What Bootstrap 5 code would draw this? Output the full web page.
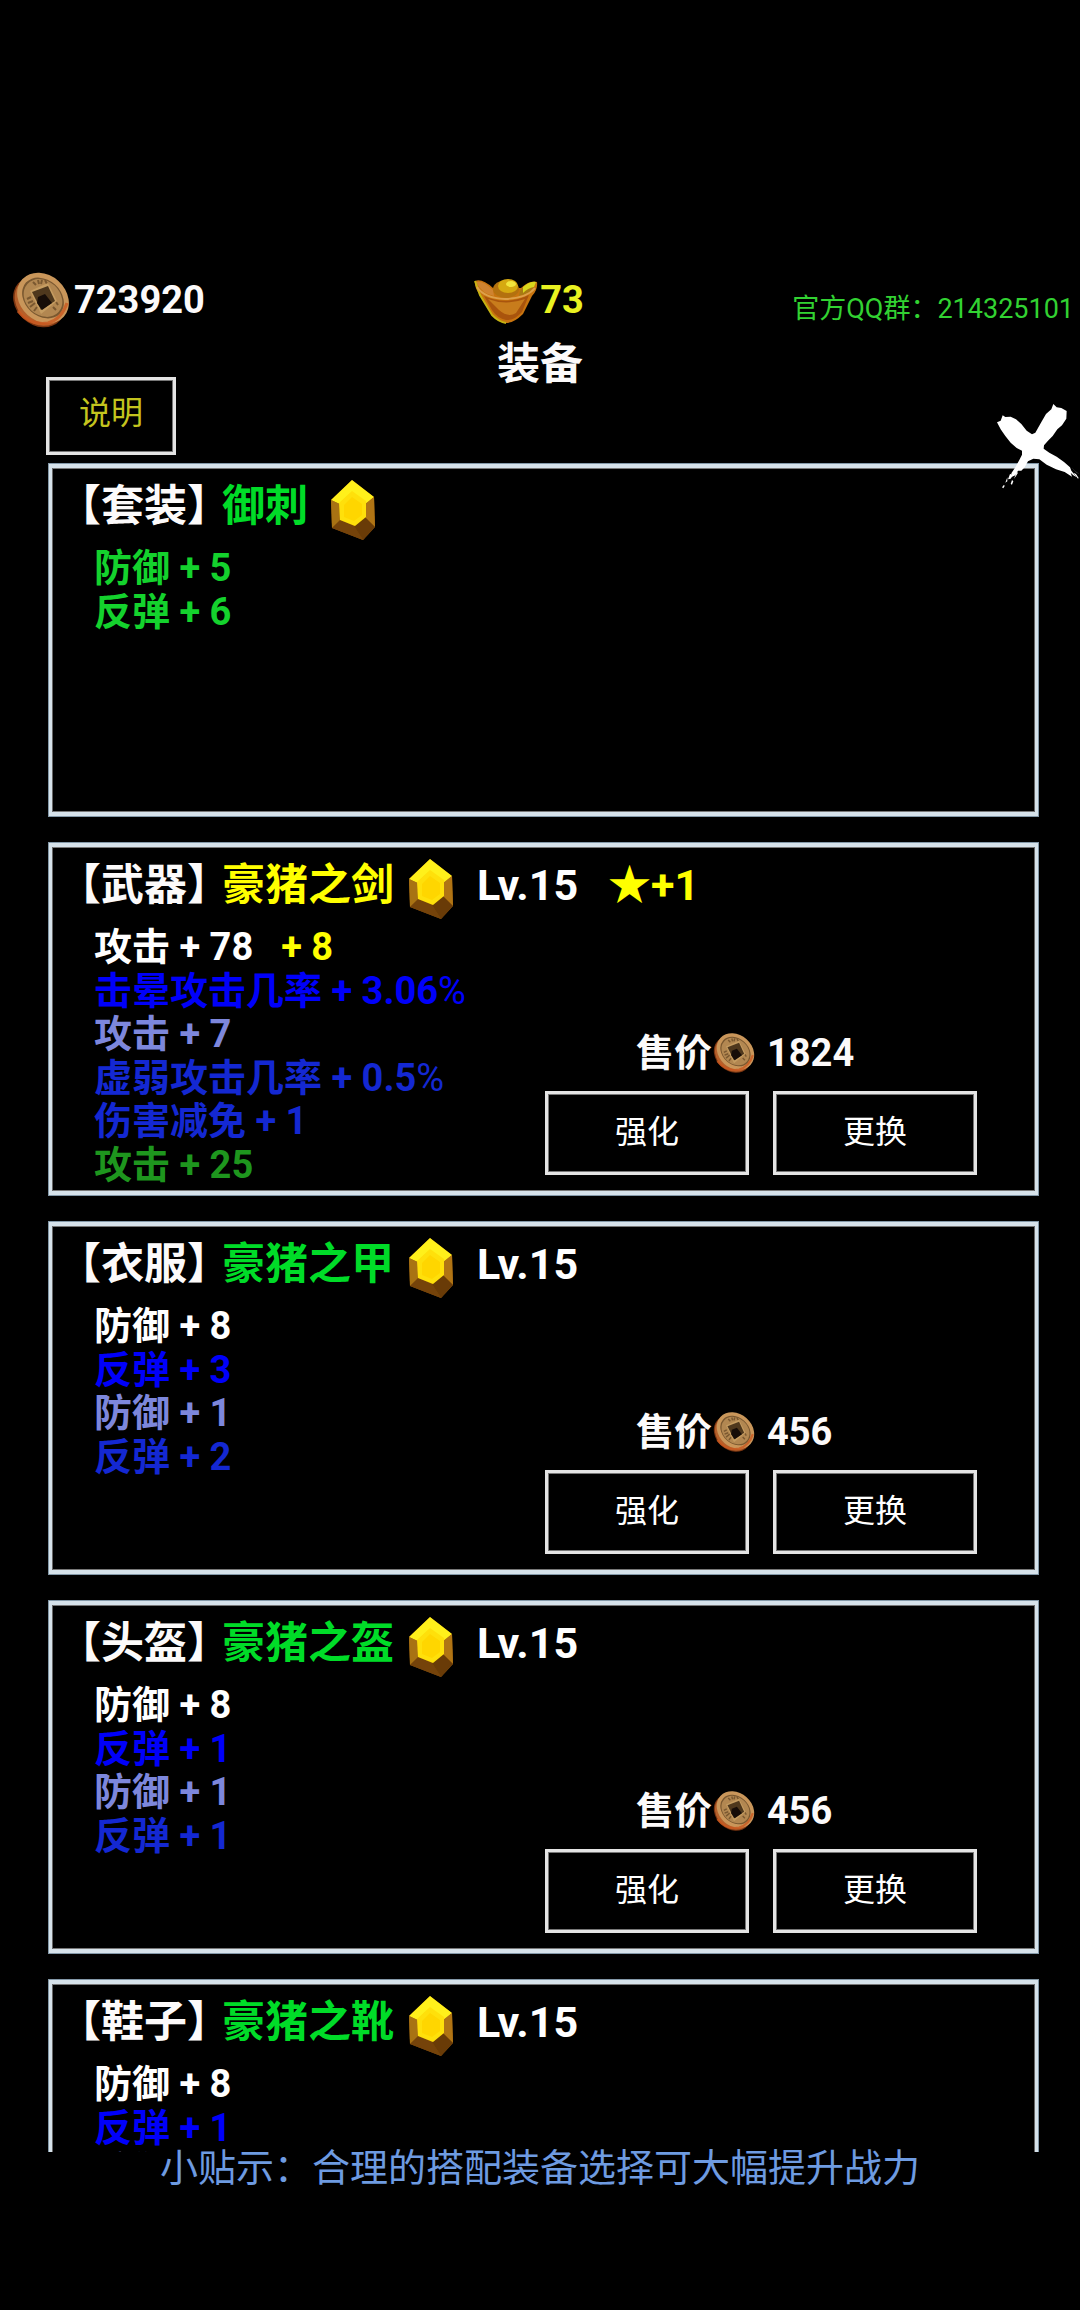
<!DOCTYPE html>
<html lang="zh-CN">
<head>
<meta charset="utf-8">
<meta name="viewport" content="width=device-width, initial-scale=1">
<title>装备</title>
<link href="https://cdn.jsdelivr.net/npm/bootstrap@5.3.0/dist/css/bootstrap.min.css" rel="stylesheet">
<style>
body{background:#000;color:#fcfafa;font-family:Roboto,"Noto Sans CJK SC",sans-serif}
.screen{padding-top:268px}
.wallet{height:60px;font-size:38px;line-height:64px;font-weight:700}
.wallet-side{flex:1 1 0}
.gold{color:#e9f221}
.group-no{color:#32d232;font-size:27px;font-weight:400;line-height:40px;padding:21px 6px 0 0}
.page-title{font-size:43px;line-height:44px;font-weight:700;padding-top:14px}
.toolbar-row{padding-left:46px;margin-top:-9px;height:86px}
.frame-btn{background:#000;border:3px solid #e4e4e4;box-shadow:inset 0 0 0 1px #777;color:#fff;font-size:32px;line-height:40px;padding:0 0 3px;height:84px;border-radius:0}
.help-btn{width:130px;height:78px;color:#c4c41e;padding-bottom:6px}
.coin-lg{width:58px;height:56px}
.ingot{width:64px;height:46px;margin:10px 2px 0 0}
.coin-sm{width:42px;height:42px;margin-left:1px}
.gem{width:46px;height:62px;margin:7px 0 0 14px}
.gem-set{margin-left:22px}
.close-btn{position:absolute;right:0;top:400px;width:84px;height:92px;z-index:2}
.close-btn svg{width:84px;height:92px}
.gear-scroll{min-height:0;padding:0 41px 0 48px;overflow-y:auto;scrollbar-width:none}
.gear-scroll::-webkit-scrollbar{display:none}
.gear-panel{flex:none;height:354px;margin-bottom:25px;padding:5px 61px 0 9px;border:1px solid #8398a8;
 box-shadow:inset 3px 0 #d6e2ea,inset -3px 0 #d6e2ea,inset 0 4px #d6e2ea,inset 0 -4px #d6e2ea,inset 4px 0 #666,inset -4px 0 #666,inset 0 5px #777,inset 0 -5px #777}
.gear-head{height:78px;padding-bottom:4px;font-size:43px;line-height:44px;font-weight:700;white-space:nowrap}
.slot{margin-right:-8px}
.lvl{color:#fff;margin-left:23px}
.star-up{color:#ff0;margin-left:30px}
.stat-list{display:grid;grid-template-rows:repeat(6,1fr);height:261px;padding-left:36px;margin:0;list-style:none;font-size:38px;line-height:43px;font-weight:700;white-space:nowrap}
.extra{color:#ff0;margin-left:28px}
.actions{width:432px;height:249px}
.price{font-size:38px;line-height:44px;font-weight:700;padding-left:91px;margin-bottom:16px}
.c-white{color:#fff}.c-green{color:#00dc28}.c-line-green{color:#14d22d}.c-yellow{color:#ff0}
.c-blue{color:#0000fa}.c-lilac{color:#7d87dc}.c-navy{color:#1428d2}.c-leaf{color:#1e961e}
.tip-bar{height:158px;font-size:38px;line-height:33px;color:#6e9be1}
</style>
</head>
<body>
<svg width="0" height="0" class="d-none" aria-hidden="true">
<symbol id="coin" viewBox="0 0 58 56">
<ellipse cx="27" cy="30" rx="28" ry="23" transform="rotate(42 27 30)" fill="#7b3511"/>
<ellipse cx="28" cy="29" rx="27" ry="23" transform="rotate(42 28 29)" fill="#b5602b"/>
<ellipse cx="31" cy="26" rx="28" ry="23" transform="rotate(42 31 26)" fill="#c9965a"/>
<ellipse cx="31" cy="26" rx="23" ry="18" transform="rotate(42 31 26)" fill="#7a5830"/>
<ellipse cx="31" cy="26" rx="21" ry="17" transform="rotate(42 31 26)" fill="#b28751"/>
<path d="M21 10l3 3m2-5l1 4m3-4l-1 4m4-4l2 4M15 27l4-2m-3 6l5-2m-3 6l5-4m-1 8l3-4M44 38l-3-3m5-2l-2-3" stroke="#7a5830" stroke-width="2" fill="none"/>
<path d="M18 19L36 11 45 29 29 42Z" fill="#c59c61"/>
<path d="M20 20L36 14 43 29 29 38Z" fill="#4f381d"/>
<path d="M26 25L33 22 40 31 30 38 25 31Z" fill="#170d08"/>
<path d="M6 39Q18 54 36 51 50 47 55 31" fill="none" stroke="#c9571f" stroke-width="3" opacity=".8"/>
</symbol>
<symbol id="ingot" viewBox="0 0 64 46">
<path d="M1 3Q8 0 19 10L47 10Q56 2 63 4 64 12 58 18L49 36Q40 45 32 45 24 44 18 37L6 17Q0 9 1 3Z" fill="#c8740f"/>
<path d="M2 4Q9 2 19 12L20 18Q8 16 2 4Z" fill="#cf8330"/>
<path d="M62 5Q52 5 46 13L45 18Q57 16 62 5Z" fill="#a87a13"/>
<path d="M1 3L6 17 18 37Q25 44 32 45" fill="none" stroke="#c5b313" stroke-width="2"/>
<path d="M10 18Q32 28 55 17L48 34Q40 43 32 42 23 40 18 32Z" fill="#a9540d"/>
<path d="M14 21Q32 28 51 21L42 35Q34 40 25 32Z" fill="#c87c1c"/>
<path d="M3 9Q10 20 31 21 53 20 61 10" fill="none" stroke="#dda04a" stroke-width="2"/>
<ellipse cx="32" cy="11" rx="13" ry="9" fill="#b3710f"/>
<ellipse cx="34" cy="8" rx="10" ry="7" fill="#d6a911"/>
<ellipse cx="37" cy="6" rx="5" ry="3" fill="#f2e53c"/>
<path d="M49 9Q56 3 62 4L60 9Q54 10 49 15Z" fill="#d9d71d"/>
</symbol>
<symbol id="gem" viewBox="0 0 46 62">
<path d="M22 1L44 18 45 48 33 61 2 49 1 21Z" fill="#8b530b"/>
<path d="M22 1L44 18 36 25 22 13 9 25 1 21Z" fill="#fff01b"/>
<path d="M1 21L10 25V42L2 49Z" fill="#a87213"/>
<path d="M44 18L35 25V39L45 48Z" fill="#b07414"/>
<path d="M2 49L10 41 24 47 33 61Z" fill="#75430a"/>
<path d="M24 47L35 38 45 48 33 61Z" fill="#693b07"/>
<path d="M22 12L36 22V38L25 47 10 41 9 24Z" fill="#ffe00b"/>
<path d="M22 18L32 25V36L24 42 14 38V26Z" fill="#ffd600"/>
</symbol>
</svg>

<div class="screen position-relative d-flex flex-column vh-100 overflow-hidden">
<header>
<div class="wallet d-flex">
<div class="wallet-side d-flex align-items-start ps-2"><svg class="coin-lg ms-1 mt-1" aria-hidden="true"><use href="#coin"/></svg><span class="ps-1">723920</span></div>
<div class="d-flex align-items-start gold me-4"><svg class="ingot" aria-hidden="true"><use href="#ingot"/></svg><span>73</span></div>
<div class="wallet-side group-no text-end">官方QQ群：214325101</div>
</div>
<h1 class="page-title text-center m-0">装备</h1>
<div class="toolbar-row"><button type="button" class="btn frame-btn help-btn">说明</button></div>
</header>
<button type="button" class="close-btn btn p-0 border-0" aria-label="关闭">
<svg viewBox="0 0 252 276" aria-hidden="true" fill="#fff"><path d="M3 67L14 62 20 46 28 51 44 50 60 58 76 72 92 92 108 103 118 98 134 70 150 42 166 28 172 12 182 22 196 24 212 33 211 56 198 76 184 88 170 108 156 122 144 136 143 146 160 158 182 170 204 186 222 202 226 212 242 232 232 226 224 218 228 230 206 216 180 208 152 194 130 178 112 176 96 184 86 202 76 212 66 212 58 226 48 230 46 220 58 202 70 180 78 164 78 152 62 144 44 128 28 108 14 88Z"/><path d="M42 222L36 238 44 236 52 224ZM34 232L28 248 34 244ZM48 240L44 252 48 254 52 244ZM24 254L18 262 22 265 26 258ZM226 202L236 212 252 224 240 216ZM232 218L246 236 248 234 240 222ZM62 216L54 236 60 228 66 218Z"/></svg>
</button>

<main class="gear-scroll flex-grow-1 d-flex flex-column">
<section class="gear-panel">
<div class="gear-head d-flex align-items-center"><span class="slot">【套装】</span><span class="c-green">御刺</span><svg class="gem gem-set" aria-hidden="true"><use href="#gem"/></svg></div>
<ul class="stat-list c-line-green"><li>防御 + 5</li><li>反弹 + 6</li></ul>
</section>

<section class="gear-panel">
<div class="gear-head d-flex align-items-center"><span class="slot">【武器】</span><span class="c-yellow">豪猪之剑</span><svg class="gem" aria-hidden="true"><use href="#gem"/></svg><span class="lvl">Lv.15</span><span class="star-up">★+1</span></div>
<div class="d-flex justify-content-between">
<ul class="stat-list"><li class="c-white">攻击 + 78<span class="extra">+ 8</span></li><li class="c-blue">击晕攻击几率 + 3.06<span class="fw-normal">%</span></li><li class="c-lilac">攻击 + 7</li><li class="c-navy">虚弱攻击几率 + 0.5<span class="fw-normal">%</span></li><li class="c-navy">伤害减免 + 1</li><li class="c-leaf">攻击 + 25</li></ul>
<div class="actions d-flex flex-column justify-content-end">
<div class="price d-flex align-items-center"><span>售价</span><svg class="coin-sm" aria-hidden="true"><use href="#coin"/></svg><span class="ps-2 ms-1">1824</span></div>
<div class="row gx-4"><div class="col"><button type="button" class="btn frame-btn w-100">强化</button></div><div class="col"><button type="button" class="btn frame-btn w-100">更换</button></div></div>
</div></div>
</section>

<section class="gear-panel">
<div class="gear-head d-flex align-items-center"><span class="slot">【衣服】</span><span class="c-green">豪猪之甲</span><svg class="gem" aria-hidden="true"><use href="#gem"/></svg><span class="lvl">Lv.15</span></div>
<div class="d-flex justify-content-between">
<ul class="stat-list"><li class="c-white">防御 + 8</li><li class="c-blue">反弹 + 3</li><li class="c-lilac">防御 + 1</li><li class="c-navy">反弹 + 2</li></ul>
<div class="actions d-flex flex-column justify-content-end">
<div class="price d-flex align-items-center"><span>售价</span><svg class="coin-sm" aria-hidden="true"><use href="#coin"/></svg><span class="ps-2 ms-1">456</span></div>
<div class="row gx-4"><div class="col"><button type="button" class="btn frame-btn w-100">强化</button></div><div class="col"><button type="button" class="btn frame-btn w-100">更换</button></div></div>
</div></div>
</section>

<section class="gear-panel">
<div class="gear-head d-flex align-items-center"><span class="slot">【头盔】</span><span class="c-green">豪猪之盔</span><svg class="gem" aria-hidden="true"><use href="#gem"/></svg><span class="lvl">Lv.15</span></div>
<div class="d-flex justify-content-between">
<ul class="stat-list"><li class="c-white">防御 + 8</li><li class="c-blue">反弹 + 1</li><li class="c-lilac">防御 + 1</li><li class="c-navy">反弹 + 1</li></ul>
<div class="actions d-flex flex-column justify-content-end">
<div class="price d-flex align-items-center"><span>售价</span><svg class="coin-sm" aria-hidden="true"><use href="#coin"/></svg><span class="ps-2 ms-1">456</span></div>
<div class="row gx-4"><div class="col"><button type="button" class="btn frame-btn w-100">强化</button></div><div class="col"><button type="button" class="btn frame-btn w-100">更换</button></div></div>
</div></div>
</section>

<section class="gear-panel">
<div class="gear-head d-flex align-items-center"><span class="slot">【鞋子】</span><span class="c-green">豪猪之靴</span><svg class="gem" aria-hidden="true"><use href="#gem"/></svg><span class="lvl">Lv.15</span></div>
<ul class="stat-list"><li class="c-white">防御 + 8</li><li class="c-blue">反弹 + 1</li><li class="c-lilac">防御 + 1</li></ul>
</section>
</main>
<footer class="tip-bar flex-shrink-0 text-center">小贴示：合理的搭配装备选择可大幅提升战力</footer>
</div>
<script src="https://cdn.jsdelivr.net/npm/bootstrap@5.3.0/dist/js/bootstrap.bundle.min.js"></script>
</body>
</html>
